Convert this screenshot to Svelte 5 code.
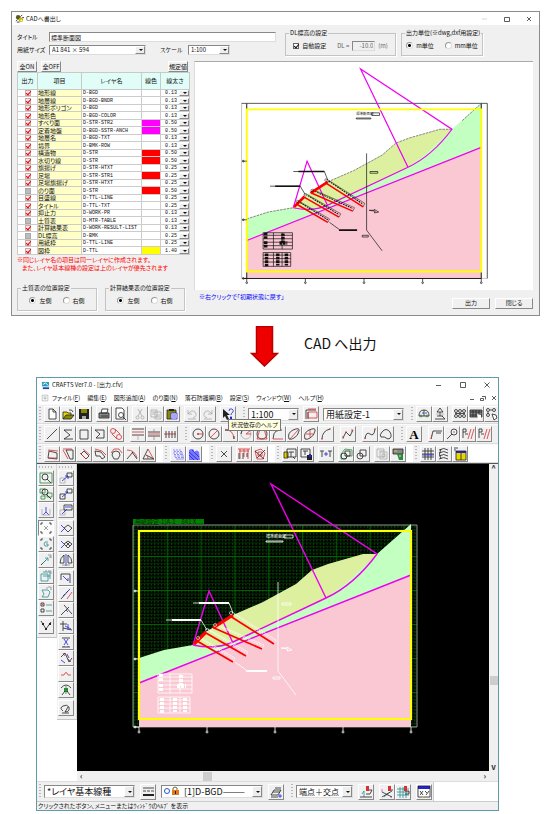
<script>
  const rows = [
    ['地形線', 'D-BGD', '', '0.13', 1], ['地層線', 'D-BGD-BNDR', '', '0.13', 1],
    ['地形ポリゴン', 'D-BGD', '', '0.13', 1], ['地形色', 'D-BGD-COLOR', '', '0.13', 1],
    ['すべり面', 'D-STR-STR2', '#ff00ff', '0.50', 1], ['定着地盤', 'D-BGD-SSTR-ANCH', '#ff00ff', '0.50', 1],
    ['地層名', 'D-BGD-TXT', '', '0.13', 1], ['境界', 'D-BMK-ROW', '', '0.13', 1],
    ['構造物', 'D-STR', '#ff0000', '0.50', 1], ['水切り線', 'D-STR', '#ff0000', '0.50', 1],
    ['旗揚げ', 'D-STR-HTXT', '', '0.25', 1], ['足場', 'D-STR-STR1', '#ff0000', '0.25', 1],
    ['足場旗揚げ', 'D-STR-HTXT', '', '0.25', 1], ['のり面', 'D-STR', '#ff0000', '0.50', 0],
    ['目盛線', 'D-TTL-LINE', '', '0.25', 1], ['タイトル', 'D-TTL-TXT', '', '0.25', 1],
    ['抑止力', 'D-WORK-PR', '', '0.13', 1], ['土質表', 'D-MTR-TABLE', '', '0.13', 0],
    ['計算結果表', 'D-WORK-RESULT-LIST', '', '0.13', 1], ['DL標高', 'D-BMK', '', '0.25', 0],
    ['用紙枠', 'D-TTL-LINE', '', '0.25', 1], ['図枠', 'D-TTL', '#ffff00', '1.40', 1]
  ];

  const menus = [['ファイル', 'F'], ['編集', 'E'], ['図形追加', 'A'], ['のり面', 'N'], ['落石防護網', 'B'], ['設定', 'S'], ['ウィンドウ', 'W'], ['ヘルプ', 'H']];

  const colours = { k: '#222', r: '#d93030', b: '#2222dd', g: '#2c8a3c', w: '#aaa', t: '#2a8f8f', y: '#e8d800', o: '#8a8a00', n: '#fff', p: '#7777ff', m: '#e050e0', s: '#888' };
  const c = (x, y, r) => `M${x - r} ${y}a${r} ${r} 0 1 0 ${2 * r} 0a${r} ${r} 0 1 0 ${-2 * r} 0`;

  // Each layer is "key:path"; a lower-case key strokes, an upper-case key fills.
  const icons = {
    new: 'N:M4 2h5l2 2v8H4z|k:M4 2h4l3 3v7H4zM8 2v3h3',
    open: 'Y:M2 5h4l1 1h3v2H5l-2 4H2z|O:M5 8h8l-3 4H2z|k:M2 12V5h4l1 1h3v2M2 12l3-4h8l-3 4zM8 3q3-1 4 2',
    save: 'K:M2 2h10v10H2z|O:M4 2h6v4H4z|W:M5 9h4v3H5z',
    print: 'N:M5 2h6l-1 4H4z|S:M2 6h10v5H2z|k:M5 2h6l-1 4H4zM2 6h10v5H2zM4 9h7',
    preview: `N:M3 1h6l2 2v9H3z|k:M3 1h6l2 2v9H3zM10 10l3 3|k:${c(8, 8, 2.5)}`,
    cut: `w:M5 2l4 7M9 2L5 9|w:${c(4.5, 10.5, 1.5)}|w:${c(9.5, 10.5, 1.5)}`,
    copy: 'w:M2 3h6v7H2zM6 5h6v7H6zM3 5h4M3 7h3M7 8h4M7 10h4',
    paste: 'O:M2 3h9v9H2z|K:M4 2h5v2H4z|N:M6 6h6v6H6z|b:M6 6h6v6H6zM7 8h4M7 10h4|k:M2 3h9v3M2 3v9h4',
    undo: 'w:M3 3v4h4M3 7q4-5 7-2q3 4-2 6M3 12h8',
    redo: 'w:M11 3v4H7M11 7q-4-5-7-2q-3 4 2 6M3 12h8',
    help: 'K:M2 2v9l2-2l2 4l2-1l-2-4h3z|b:M8 4q0-3 3-2q2 1 1 3q-2 1-2 3M10 9v2|B:M9 10h2v2H9z',
    page: 'k:M2 3v9M2 3h10M4 5v7|r:M4 5h9v6H4zM4 2h8',
    car: `k:M2 9q0-6 5-6t5 6zM7 3v6|b:M5 6h2M8 6h2|g:${c(4, 9, 1)}|g:${c(10, 9, 1)}`,
    survey: 'k:M7 1L4 5h6zM7 5v4M4 9h6M2 12h10L9 9|w:M3 7h8',
    nodes: `k:${c(3, 4, 1.5)}${c(7, 4, 1.5)}${c(11, 4, 1.5)}${c(3, 9, 1.5)}${c(7, 9, 1.5)}${c(11, 9, 1.5)}|k:M2 6.5h10`,
    block: 'S:M1 3h12v7H1z|k:M1 3h12v7H1zM1 5h12M1 8h12M4 3v7M7 3v7M10 3v7|N:M8 7l4 1v4l-3 1z',
    hand: `k:${c(3, 3, 1.5)}${c(9, 3, 1.5)}${c(3, 8, 1.5)}|k:M3 5v2M5 3h2|N:M7 7l4 1l1 3l-3 2z|k:M7 7l4 1l1 3l-3 2z`,
    line: 'k:M2 12L12 2',
    poly: 'k:M11 3H3l6 5l-6 4h9',
    rect: 'k:M3 3h8v9H3z',
    polygon: 'k:M2 3h9v8H3l4-4z',
    chain: `r:${c(4, 4, 2.5)}|r:${c(10, 10, 2.5)}|r:M3 7l5 5M6 2l5 5`,
    par1: 'k:M1 2h12M1 8h12|r:M1 5h12|w:M7 8v5',
    par2: 'k:M1 5h12M1 9h12|r:M1 7h12|s:M7 2v3M7 9v4',
    cross: 'r:M1 7h12|k:M3 4v7M6 4v7M9 4v7M12 4v7',
    circle: `k:${c(7, 7, 5)}|R:${c(7, 7, 1)}|r:M7 7h5`,
    circle2: `k:${c(7, 7, 5)}|r:M3 11L11 3`,
    arc: 'r:M2 3q8-1 9 9|k:M2 3l3 0M11 9v3',
    arc2: `w:${c(7, 7, 5)}|k:M2 7a5 5 0 0 1 9-3|r:M7 7l5-4M7 7h5`,
    circle3: `k:${c(7, 7, 5)}|r:M2 12L5 2h4l3 10z`,
    arc4: 'k:M11 3H6q-4 3-4 9|r:M2 12h10M6 3v2',
    ell1: 'k:M2 12Q0 6 6 3Q13 0 12 4Q11 9 7 11Q4 13 2 12|r:M3 12l8-9',
    ell2: 'k:M2 12Q0 6 6 3Q13 0 12 4Q11 9 7 11Q4 13 2 12|r:M7 3v7M3 7h7',
    ell3: 'k:M3 12Q3 4 11 2|r:M10 2h2M2 12h2',
    zig: 'k:M2 11l3-6l4 4l3-6|r:M2 9v3M5 4v2M11 2v3',
    spline: 'k:M2 12q1-8 5-5t5-5|r:M1 11h2M11 2h2',
    blob: 'k:M3 5q4-5 8 0q3 6-2 7q-4-3-7-2q-2-2 1-5z',
    text: '',
    leader: 'k:M4 4h9M7 6h5M4 4l-2 8|r:M2 12l1-4',
    balloon: `k:${c(9, 5, 3)}|k:M7 7l-5 5|r:M8 5h2`,
    hatch: 'r:M7 12l3-10M10 12l3-10|k:M2 2h3v3H2zM2 5v6M4 7h3',
    dim1: 'k:M3 11L4 4l8 2v6z|r:M3 3l10 1M3 11h9',
    dim2: 'k:M5 3h7v9H9L5 3z|r:M2 3l5 9M2 2h9',
    dim3: 'k:M7 4l5 5l-3 3l-5-5z|r:M6 2l7 6M3 6l6 6',
    dim4: 'k:M2 4l6 1l4 5l-3 2l-2-3H3z|r:M2 2l7 2l4 4',
    dim5: 'k:M3 8q0-4 4-4t4 4l-2 4H5z|r:M2 6l3-4h5l3 4',
    dim6: 'r:M2 3q8 0 10 8|k:M2 12l6-7M7 5l5 7',
    dim7: 'k:M2 12h11l-8-4M2 12L7 2|r:M7 2l5 9M5 8q2 1 2 4',
    hat1: 'p:M2 3h2M5 3h2M8 3h2M3 4.500h2M6 4.500h2M9 4.500h2M2 6h2M5 6h2M8 6h4M3 7.500h2M6 7.500h2M9 7.500h3M3 9h2M6 9h3M10 9h3M4 10.500h2M7 10.500h2M10 10.500h3M5 12h8',
    hat2: 'P:M2 3q3-2 5 0v2q3-3 5 0l1 8H2z|b:M2 5l9 8M2 8l5 5M5 3l7 7',
    x: 'k:M4 4l6 6M10 4l-6 6',
    comb: 'r:M1 2h12M2 4h10M3 2v10M7 2v8M11 2v10|k:M2 6v6M6 6v6M10 6v4',
    web: 'r:M2 4l6-2l4 4l-2 6l-6 0z|k:M2 4l9 8M12 3L4 11|r:M5 5h4v4H5z',
    load: 'Y:M1 5h4v6H1z|k:M1 5h4v6H1zM4 2h9v8H4zM6 5h5M8 5v5M10 10l2 2',
    load2: 'K:M8 8h5v5H8z|k:M2 2h9v8H2zM4 4h5M6 4v4|B:M10 7h2v3h-2z',
    tt: 'k:M1 4h4M3 4v6M9 4h4M11 4v6|b:M5 7h4M7 5v4',
    merge1: `g:M2 7l4-5l7 1v6H8l-1 3H2z|k:${c(5, 9, 3)}|k:M6 4h5v5H6z`,
    merge2: `k:${c(5, 9, 3)}|k:M5 3h6v6H5z`,
    ghost: 'w:M2 2h7v8H2zM5 5h7v7H5zM4 4h5M7 7h3v3H7z',
    app: 'S:M2 2h10v5H2z|k:M2 2h10v5H2z|G:M6 7h6v6H8z|y:M3 4h3|n:M8 9h2',
    fence: 'k:M1 4h12M1 7h12M1 10h12M4 1v12M7 1v12M10 1v12|b:M1 8h12',
    wave: 'k:M2 3q5-3 9 0M2 6q5-3 9 0M2 9q5-3 9 0M2 12q5-3 9 0M4 2q-3 5 0 10',
    win: 'Y:M3 4h10v9H3z|B:M3 4h10v2H3z|k:M1 1h4M1 3h2M3 4h10v9H3zM8 6v7',
    zoom: `g:M1 2h12v10H1z|k:${c(6, 6, 3)}|k:M8 8l4 4`,
    zoomall: `g:M1 2h5v4H1zM8 6h5v4H8zM2 9h4v3H2z|k:${c(6, 5, 3)}|k:M8 8l4 4`,
    origin: 'b:M7 4v5M7 9l-3 3M7 9l3 3|w:M3 6v6h8V6',
    sel: 'k:M2 4V2h2M10 2h2v2M12 10v2h-2M4 12H2v-2|s:M5 5l4 4M9 5L5 9',
    selg: 'k:M2 4V2h2M10 2h2v2M12 10v2h-2M4 12H2v-2|t:M9 5q-4-1-4 2t4 2V7H7',
    arrow: 'k:M2 12l5-5|t:M4 10l5-5M9 5H6M9 5v3|s:M9 2h3M10 4h2M12 2v3',
    boxt: 't:M2 5h7v7H2zM4 7h7M4 3h7v7|s:M9 2h3v3M6 2h2',
    layer: 't:M3 5h6l2 2l-2 5H3l2-3z|s:M9 2h3v3M7 3h2',
    checks: 'k:M2 2h3v3H2zM2 8h3v3H2z|r:M2 2l3 3|t:M7 4h6M7 10h6',
    vee: 'K:M3 4h2v2H3zM6 9h2v2H6zM10 4h2v2h-2z|k:M2 2l5 8l5-7',
    move: 'w:M1 7h5v5H1z|k:M8 2h5v4H8z|b:M3 10l6-5M9 5H6M9 5v3',
    copym: 'k:M1 7h5v5H1zM8 2h5v4H8z|b:M3 10l6-5M9 5H6',
    numcopy: 'w:M1 7h5v5H1z|k:M5 2h8v5H5z|b:M3 11l5-5M7 3v2M9 3v2M11 3v2',
    rot: 'k:M9 4l4 3l-4 4l-4-4z|b:M2 4l4 4M2 11l3-3',
    rotc: 'k:M9 4l4 3l-4 4l-4-4zM7 5l4 4M11 5L7 9|b:M2 4l3 3M2 11l3-3',
    mirror: 'k:M5 2v8H1q0-5 4-8M9 2v8h4q0-5-4-8|b:M7 1v12|s:M3 12h8',
    corner: 'k:M2 3h9v9M2 3v6|b:M4 5l5 5M9 10V7',
    slant: 'k:M2 12L9 4|r:M8 12l5-7|b:M7 6l4-4M4 9l2-2',
    extend: 'k:M2 12L10 4M5 2l8 9|b:M7 7l2 2',
    trim: 'k:M1 5h7M4 2v10M4 9l9 2|b:M6 7l6 3M9 5v6',
    snip: 'k:M3 3h8M3 12h8|b:M5 4l4 6M9 4L5 10M5 11v1M9 11v1',
    joint: 'r:M4 2l2 3M9 8l3 3|k:M2 6l4-4l4 9l3-4|b:M2 9l4 3M8 3l2 4',
    bump: 'r:M2 8h3q2-5 4 0h3',
    tree: 'G:M5 5h4v4H5z|k:M2 5q5-6 10 0M3 12l3-4M11 12L8 8|g:M7 3v8',
    loop: 'k:M4 10q-4-3 0-5t6 1q1 5-4 5l3-5M3 12h7',
    lines: 'k:M2 3h11M2 6h3M6 6h3M10 6h3|K:M2 9h11v2H2z',
    props: 'k:M2 10l3-5h7l-3 5zM4 7h7M6 3h6M2 12h7|b:M9 11h4M11 9v4',
    snap1: 't:M5 12V6M3 9l2-3|k:M1 12h12M8 5h5l-2 4H7|R:M7 1h3v5H7z',
    snap2: 'm:M2 4v3M11 11v2|t:M4 12l6-5|k:M2 7l10 5M12 6L2 12M9 5h4|R:M8 1h3v5H8z',
    snap3: 't:M1 4h12M1 7h12M1 10h12M4 2v11M7 2v11M10 2v11|k:M9 6h4v3H9|R:M8 1h3v5H8z',
    xy: 'N:M1 2h12v10H1z|B:M1 1h12v3H1z|k:M1 1h12v11H1zM3 6l3 4M6 6l-3 4M8 6l2 2M12 6l-3 4|y:M5 13l2-2',
    doc: 'N:M2 2h10v10H2z|s:M2 2h10v10H2zM4 5h6M4 8h6M7 5v5'
  };
  const layers = (name) => icons[name] ? icons[name].split('|').map((l) => {
    const key = l[0];
    const low = key.toLowerCase();
    return { d: l.slice(2), fill: key === low ? 'none' : colours[low], stroke: key === low ? colours[low] : 'none' };
  }) : [];

  const paper = [
    [['new', 'open', 'save'], ['print', 'preview'], ['cut', 'copy', 'paste'], ['undo', 'redo'], ['help']],
    [[{ label: '縮尺', value: '1:100', cls: 'w51' }], ['page'], [{ label: '用紙', value: '用紙設定-1', cls: 'w81' }]],
    [['car', 'survey'], ['nodes', 'block', 'hand']]
  ];
  const draw = [
    [['line', 'poly', 'rect', 'polygon', 'chain'], ['par1', 'par2', 'cross']],
    [['circle', 'circle2', 'arc', 'arc2', 'circle3', 'arc4', 'ell1', 'ell2', 'ell3'], ['zig'], ['spline', 'blob']],
    [['text'], ['leader', 'balloon', 'hatch', 'hatch']]
  ];
  const shape = [
    [['dim1', 'dim2', 'dim3', 'dim4', 'dim5', 'dim6', 'dim7']],
    [['hat1', 'hat2']],
    [['x'], ['comb', 'web']],
    [['load', 'load2'], ['tt'], ['merge1', 'merge2'], ['ghost', 'app']],
    [['fence', 'wave', 'win']]
  ];
  const bottom = [
    [[{ label: '線種', value: '*レイヤ基本線種', cls: 'w91' }], ['lines'], [{ label: 'レイヤ', value: '[1]D-BGD———', cls: 'w102' }], ['props']],
    [[{ label: 'スナップ', value: '端点＋交点', cls: 'w57' }], ['snap1'], ['snap2', 'snap3'], ['xy']]
  ];
  const sideA = [['zoom', 'zoomall', 'origin'], ['sel', 'selg', 'arrow', 'boxt', 'layer', 'checks'], ['vee']];
  const sideB = [['move', 'copym', 'numcopy'], ['rot', 'rotc', 'mirror'], ['corner', 'slant', 'extend', 'trim', 'snip', 'joint', 'bump', 'tree'], ['loop']];

  const bolts = [[197, 641, 233, 662], [206, 633, 246, 656], [214, 628, 262, 649], [230, 616, 274, 644]];
  const ticksX = [139, 207, 275, 343, 411];
  const ticksY = [591, 659, 727];
</script>

{#snippet icon(name)}
  <svg viewBox="0 0 14 14" aria-hidden="true">
    {#each layers(name) as l}
      <path d={l.d} fill={l.fill} stroke={l.stroke} />
    {/each}
    {#if name === 'text'}<text x="7" y="12" text-anchor="middle">A</text>{/if}
  </svg>
{/snippet}

{#snippet item(it)}
  {#if typeof it === 'string'}
    <button class="tool" class:on={it === 'sel'} aria-label={it}>{@render icon(it)}</button>
  {:else}
    <span class="drop big {it.cls}">
      {#if it.cls === 'w102'}
        <svg class="lock" viewBox="0 0 20 10" aria-hidden="true">
          <circle cx="5" cy="5" r="2.500" fill="none" stroke="#2255cc" />
          <path d="M11 4V2q2-2 4 0v2" fill="none" stroke="#7a6a20" />
          <path d="M10 4h7v5h-7z" fill="#e07a20" /><path d="M13 5h1v3h-1z" fill="#222" />
        </svg>
      {/if}
      <select aria-label={it.label}><option>{it.value}</option></select>
    </span>
  {/if}
{/snippet}

{#snippet toolbar(bars, cls)}
  <div class="row {cls}">
    {#each bars as bar}
      <div class="bar">
        <span class="grip"></span>
        <div class="groups">
          {#each bar as group}
            <div class="group">{#each group as it}{@render item(it)}{/each}</div>
          {/each}
        </div>
      </div>
    {/each}
  </div>
{/snippet}

{#snippet side(groups)}
  <div class="side">
    <span class="grip flat"></span>
    {#each groups as group}
      <div class="stack">{#each group as it}{@render item(it)}{/each}</div>
    {/each}
  </div>
{/snippet}

{#snippet section(ink, light)}
  <path d="M139 683L411 575V727H139z" fill="#f9c8d2" />
  <path d="M139 658L164 650L193 645Q215 650 233 642L326 598L377 554L411 524V575L139 683z" fill="#c2ffc0" />
  <path d="M193 645L206 632L233 615L263 602L296 584L312 570L328 564L363 554H377L345 584L326 598L233 642Q215 650 193 645z" fill="#dcf0a0" />
  {#if light}
    <path d="M139 658L164 650L193 645M233 615L263 602L296 584L312 570L328 564L363 554H377M389 544L411 524" fill="none" stroke="#555" stroke-width=".8" stroke-dasharray="3 1" />
    <path d="M133 524H418V727H133z" fill="none" stroke="#bbb" />
    <path d="M133 524H418V727" fill="none" stroke="#555" />
    <path d="M139 524v7M411 524v7M139 719v8M411 719v8M136 727H411" stroke="#222" stroke-width="1.200" />
  {/if}
  <g fill="none" stroke="#f000f0" stroke-width="1.400">
    <path d="M139 683L411 575M193 645Q215 650 233 642L326 598Q354 585 377 554L271 484L326 598M193 645L209 591L233 643" />
  </g>
  <g fill="none" stroke={ink} stroke-width=".8">
    {#each bolts as [a, b, x, y]}
      <path d="M{a + 2} {b - 4}L{x + 2} {y - 4}L{x} {y}" stroke-width=".6" />
      <path d="M{a + 4} {b - 2}L{x} {y - 3}" stroke-dasharray="2 1" stroke-width={light ? 1.2 : .7} />
    {/each}
    <path d="M193 603H229L233 613M166 620H201L207 630M278 582V671L296 695M235 662L246 670M281 648h6v-1l5 3l-5 1l1-2zM273 677h7v2h-7zM282 603h9v2h-9zM284 535h9v3h-9zM266 541h17v1h-17z" />
    <path d="M199 603H229M172 620H201M246 671H267" stroke-width="1.800" />
    <path d="M158 674h34v19h-34zM158 677h34M158 681h34M158 685h34M158 689h34M170 674v19M180 674v19M158 697h32v16h-32zM158 700h32M158 704h32M158 708h32M170 697v16M180 697v16" />
    <path d="M161 674v8M161 684v8M181 675v12M177 686h9M162 698v15M175 698v14M185 698v14" stroke-width="4" stroke-dasharray="3 1" />
  </g>
  <path d="M194 644L206 632M213 628L233 615" stroke="#ff0000" stroke-width="3.200" />
  {#each bolts as [a, b, x, y]}
    <path d="M{a} {b}L{x} {y}" stroke="#ff0000" stroke-width="1.800" />
    <circle cx={a + 1} cy={b - 3} r="1.500" fill="none" stroke={ink} stroke-width=".6" />
  {/each}
  <path d="M139 531H411V719H139z" fill="none" stroke="#ffff00" stroke-width="2.200" />
  <text x="266" y="538" font-size="4" fill={ink}>標準断面図</text>
  <g stroke={ink} stroke-width=".8" fill="none">
    {#each ticksX as x}<path d="M{x} 727v4" /><circle cx={x} cy="732" r="1" />{/each}
    {#each ticksY as y}<path d="M134 {y}h5" /><circle cx="135" cy={y} r="1" />{/each}
  </g>
{/snippet}

<main>
  <section class="dialog">
    <header class="cap">
      <svg class="logo" viewBox="0 0 10 10" aria-hidden="true">
        <circle cx="3.500" cy="3.500" r="2.500" fill="#555a20" /><circle cx="6.500" cy="6.500" r="2.500" fill="#c8b400" />
        <path d="M1 8l2-2M6 3l2-2M8 4h2M2 9h3" stroke="#333" /><circle cx="7" cy="7" r="1" fill="#fff" />
      </svg>
      <h1>CADへ書出し</h1>
      <div class="win">
        <button aria-label="最小化"><svg viewBox="0 0 8 8"><path d="M1 4h5" stroke="#ccc" /></svg></button>
        <button aria-label="最大化"><svg viewBox="0 0 8 8"><path d="M1.500 2.500h5v4h-5z" /></svg></button>
        <button aria-label="閉じる"><svg viewBox="0 0 8 8"><path d="M2 2l4 4M6 2L2 6" /></svg></button>
      </div>
    </header>

    <div class="top">
      <div class="form">
        <div class="line"><label for="ttl">タイトル</label><input id="ttl" type="text" value="標準断面図" /></div>
        <div class="line">
          <label for="size">用紙サイズ</label>
          <span class="drop w97"><select id="size"><option>A1 841 × 594</option></select></span>
          <label class="scale" for="scale">スケール</label>
          <span class="drop w42"><select id="scale"><option>1:100</option></select></span>
        </div>
      </div>
      <fieldset class="datum">
        <legend>DL標高の設定</legend>
        <label><input type="checkbox" class="plain" checked />自動設定</label>
        <label class="dim">DL = <input type="text" class="num" value="-10.0" disabled /> (m)</label>
      </fieldset>
      <fieldset class="unit">
        <legend>出力単位(※dwg,dxf用設定)</legend>
        <label><input type="radio" name="unit" checked />m単位</label>
        <label><input type="radio" name="unit" />mm単位</label>
      </fieldset>
    </div>

    <div class="mid">
      <div class="left">
        <div class="acts"><button class="btn">全ON</button><button class="btn">全OFF</button><button class="btn last">規定値</button></div>
        <table>
          <thead><tr><th class="c1">出力</th><th class="c2">項目</th><th class="c3">レイヤ名</th><th class="c4">線色</th><th class="c5">線太さ</th></tr></thead>
          <tbody>
            {#each rows as [name, layer, colour, width, on]}
              <tr>
                <td class="chk"><input type="checkbox" checked={!!on} aria-label={name} /></td>
                <td class="nm">{name}</td>
                <td class="ly">{layer}</td>
                <td style:background={colour || '#fff'}></td>
                <td class="wd"><span class="drop cell"><select aria-label="{name}の線太さ"><option>{width}</option></select></span></td>
              </tr>
            {/each}
          </tbody>
        </table>
        <p class="warn">※同じレイヤ名の項目は同一レイヤに作成されます。<br /><span>また、レイヤ基本線種の設定は上のレイヤが優先されます</span></p>
        <div class="pair">
          <fieldset>
            <legend>土質表の位置設定</legend>
            <label><input type="radio" name="soil" checked />左側</label>
            <label><input type="radio" name="soil" />右側</label>
          </fieldset>
          <fieldset>
            <legend>計算結果表の位置設定</legend>
            <label><input type="radio" name="res" checked />左側</label>
            <label><input type="radio" name="res" />右側</label>
          </fieldset>
        </div>
      </div>
      <div class="right">
        <svg class="view" viewBox="79 476 392 264" role="img" aria-label="断面プレビュー">{@render section('#111', true)}</svg>
        <div class="foot">
          <p>※右クリックで「初期状態に戻す」</p>
          <button class="btn">出力</button><button class="btn">閉じる</button>
        </div>
      </div>
    </div>
  </section>

  <div class="flow">
    <svg viewBox="0 0 29 41" aria-hidden="true"><path d="M6.500 .5h16V27.500h5L14.500 40L1.500 27.500h5z" fill="#ee0000" stroke="#b80000" stroke-width="1.500" /></svg>
    <p>CAD へ出力</p>
  </div>

  <section class="app">
    <header class="cap">
      <svg class="logo" viewBox="0 0 10 10" aria-hidden="true"><path d="M1 1h8v5H1z" fill="#2aa0b8" /><path d="M2 7h7v2H2z" fill="#2244bb" /><path d="M2 4l3-2l3 3" stroke="#fff" fill="none" /></svg>
      <h1>CRAFTS Ver7.0 - [出力.cfv]</h1>
      <div class="win">
        <button aria-label="最小化"><svg viewBox="0 0 8 8"><path d="M1 4.500h5" /></svg></button>
        <button aria-label="最大化"><svg viewBox="0 0 8 8"><path d="M1.500 1.500h5v5h-5z" /></svg></button>
        <button aria-label="閉じる"><svg viewBox="0 0 8 8"><path d="M1.500 1.500l5 5M6.500 1.500l-5 5" /></svg></button>
      </div>
    </header>
    <nav>
      <span class="mdi">{@render icon('doc')}</span>
      {#each menus as [name, key]}<button>{name}(<u>{key}</u>)</button>{/each}
      <div class="sub">
        <button aria-label="子を最小化"><svg viewBox="0 0 8 8"><path d="M2 5.500h4" /></svg></button>
        <button aria-label="子を元に戻す"><svg viewBox="0 0 8 8"><path d="M1.500 4.500h3v2h-3zM3 2.500h3.500v3" /></svg></button>
        <button aria-label="子を閉じる"><svg viewBox="0 0 8 8"><path d="M2 2l4 4M6 2L2 6" /></svg></button>
      </div>
    </nav>
    <div class="bars">
      {@render toolbar(paper, 'one')}
      <span class="tip" role="tooltip">状況依存のヘルプ</span>
      {@render toolbar(draw, 'two')}
      {@render toolbar(shape, 'three')}
    </div>
    <div class="work">
      {@render side(sideA)}
      {@render side(sideB)}
      <div class="stage">
        <svg class="canvas" viewBox="77 464 412 307" role="img" aria-label="出力図面">
          <defs>
            <pattern id="minor" x="133" y="522" width="3.380" height="3.400" patternUnits="userSpaceOnUse">
              <path d="M1.500 .5v1.800" stroke="#0b5a0b" /><path d="M0 .5h3.400" stroke="#042f04" stroke-width=".8" />
            </pattern>
            <pattern id="major" x="133" y="522" width="33.800" height="34" patternUnits="userSpaceOnUse">
              <path d="M0 0V34M0 0H33.800" stroke="#007000" stroke-width="1.500" />
            </pattern>
          </defs>
          <path d="M77 464h412v307H77z" fill="#000" />
          <path d="M133 525H417V727H133z" fill="url(#minor)" />
          <path d="M133 525H417V727H133z" fill="url(#major)" />
          <path d="M133 525H417V727H133z" fill="none" stroke="#8a948a" />
          <path d="M133 519h71v5h-71z" fill="#008200" />
          <text x="135" y="524" font-size="6" fill="#002800">用紙設定-1[A-1　841 X…</text>
          {@render section('#fff', false)}
        </svg>
        <div class="hbar"><i>‹</i><b></b><i>›</i></div>
      </div>
      <div class="vbar"><i>^</i><b></b><i>v</i></div>
    </div>
    <div class="under">{@render toolbar(bottom, 'base')}</div>
    <footer>クリックされたボタン、メニューまたはｳｨﾝﾄﾞｳのﾍﾙﾌﾟ を表示</footer>
  </section>
</main>

<style>
  :global(body) { background: #fff; }
  main { padding: 11px 6px 4px 11px; font-family: "Noto Sans CJK JP", "Liberation Sans", sans-serif; font-size: 6px; line-height: 8px; color: #111; font-feature-settings: "palt"; }
  main * { box-sizing: border-box; }
  button, input, select { font: inherit; font-feature-settings: inherit; color: inherit; margin: 0; padding: 0; border-radius: 0; }
  h1, p { margin: 0; font-size: inherit; font-weight: 400; }
  svg { display: block; }
  fieldset { min-width: 0; margin: 0; padding: 5px 0; border: 1px solid #c4c4c4; box-shadow: 1px 1px 0 #fff; display: flex; justify-content: center; gap: 11px; }
  legend { padding: 0 1px; margin-left: 3px; line-height: 6px; white-space: nowrap; }
  fieldset label { display: flex; align-items: center; gap: 3px; height: 9px; white-space: nowrap; }

  .cap { display: flex; align-items: center; height: 13px; padding-left: 3px; background: #fff; }
  .cap h1 { margin-left: 2px; flex: 1; }
  .logo { width: 9px; height: 9px; }
  .win { display: flex; gap: 14px; padding-right: 6px; }
  .win button, .sub button { width: 8px; height: 8px; border: 0; background: none; }
  .win svg, .sub svg { width: 8px; height: 8px; fill: none; stroke: #333; stroke-width: .8; }

  .dialog { border: 1px solid #8c8c8c; background: #f0f0f0; }
  .top { display: flex; padding: 5px 56px 0 5px; gap: 5px; height: 36px; align-items: flex-start; }
  .form { flex: 1; margin: 2px 4px 0 0; display: grid; gap: 3px; }
  .line { display: flex; height: 10px; align-items: center; }
  .line label { width: 32px; white-space: nowrap; }
  .line .scale { width: 28px; margin-left: 14px; }
  input[type="text"] { height: 10px; border: 1px solid; border-color: #888 #ddd #ddd #888; background: #fff; padding: 0 1px; min-width: 0; }
  .line input { flex: 1; }
  input.num { width: 23px; text-align: right; background: #f0f0f0; }
  .dim { color: #666; }
  .datum { width: 111px; }
  .unit { width: 82px; }

  input[type="checkbox"] { appearance: none; width: 6px; height: 6px; background: #bcbcbc; border: 1px solid #a8a8a8; position: relative; display: block; }
  input[type="checkbox"]:checked { background: #ffe4e4; border-color: #c8a8a8; }
  input[type="checkbox"]:checked::after { content: ""; position: absolute; left: 1px; top: -1px; width: 2px; height: 4px; border: solid #e80000; border-width: 0 1px 1px 0; transform: rotate(40deg); }
  input.plain:checked { background: #fff; border-color: #666; }
  input.plain:checked::after { border-color: #111; }
  input[type="radio"] { appearance: none; width: 7px; height: 7px; border: 1px solid #999; border-right-color: #ddd; border-bottom-color: #ddd; border-radius: 50%; background: #fff; }
  input[type="radio"]:checked { background: radial-gradient(#000 0 1px, #fff 2px); }

  .drop { position: relative; display: block; height: 10px; background: #fff; border: 1px solid; border-color: #888 #ddd #ddd #888; }
  .drop select { appearance: none; display: block; width: 100%; height: 100%; border: 0; background: none; padding: 0 9px 0 2px; line-height: 8px; outline: 0; }
  .drop::before { content: ""; position: absolute; right: 0; top: 0; bottom: 0; width: 8px; background: #eee; border: 1px solid; border-color: #fff #888 #888 #fff; pointer-events: none; }
  .drop::after { content: ""; position: absolute; right: 2px; top: 50%; margin-top: -1px; border: 2px solid transparent; border-top-color: #111; border-bottom: 0; pointer-events: none; }
  .cell { height: 7px; border: 0; }
  .cell select { line-height: 7px; font-family: "Liberation Mono", monospace; font-size: 5px; padding-left: 4px; }
  .w97 { width: 97px; } .w42 { width: 42px; } .w51 { width: 51px; } .w81 { width: 81px; } .w91 { width: 91px; } .w102 { width: 102px; } .w57 { width: 57px; }

  .mid { display: flex; padding: 0 6px 4px 5px; gap: 4px; }
  .left { width: 173px; flex: none; }
  .acts { display: flex; gap: 4px; height: 11px; }
  .btn { height: 11px; min-width: 20px; line-height: 8px; background: #f0f0f0; border: 1px solid; border-color: #fff #888 #888 #fff; }
  .last { margin-left: auto; margin-right: 2px; }
  table { width: 100%; table-layout: fixed; border-collapse: collapse; background: #fff; }
  th { height: 17px; background: #e0fdf8; font-weight: 400; padding: 0; border: 1px solid #c4ccca; }
  td { padding: 0; height: 7px; line-height: 6px; border: 1px solid #ccc; white-space: nowrap; overflow: hidden; }
  tbody tr { height: 7px; }
  tbody tr:nth-child(even), tbody tr:nth-child(even) td { height: 8px; }
  .c1 { width: 20px; } .c2 { width: 44px; } .c3 { width: 60px; } .c4 { width: 19px; }
  .chk input { margin: 0 auto; }
  .nm { background: #ffffc6; }
  .ly { font-family: "Liberation Mono", monospace; font-size: 5px; padding-left: 1px; }
  .wd .cell { height: 6px; }
  .warn { color: #ff0000; white-space: nowrap; margin-top: 1px; }
  .warn span { padding-left: 5px; }
  .pair { display: flex; gap: 8px; margin-top: 13px; }
  .pair fieldset { width: 80px; }
  .right { flex: 1; min-width: 0; }
  .view { width: 100%; height: auto; background: #fff; border-top: 1px solid #aaa; border-left: 1px solid #ddd; }
  .foot { display: flex; gap: 5px; padding: 3px 0 0 5px; }
  .foot p { flex: 1; color: #0000ff; }
  .foot .btn { width: 38px; margin-top: 5px; }

  .flow { display: flex; align-items: flex-start; gap: 25px; padding: 10px 0 10px 239px; }
  .flow svg { width: 29px; height: 41px; }
  .flow p { font-size: 14px; line-height: 34px; }

  .app { margin: 0 41px 0 25px; border: 1px solid #5f9aa8; background: #f0f0f0; }
  .app .cap { height: 14px; padding-left: 4px; }
  .app .win { gap: 16px; padding-right: 7px; }
  nav { display: flex; align-items: center; height: 12px; padding-left: 4px; gap: 7px; background: #fff; }
  nav > button { border: 0; background: none; white-space: nowrap; }
  .mdi { width: 8px; height: 8px; margin-right: -4px; }
  .sub { display: flex; gap: 3px; margin-left: auto; }
  .bars { position: relative; border-bottom: 1px solid #555; }
  .row { display: flex; height: 20px; align-items: center; gap: 5px; overflow: hidden; border-top: 1px solid #fafafa; border-bottom: 1px solid #dcdcdc; }
  .three { height: 19px; gap: 7px; background: #fff; }
  .three .bar { background: #f0f0f0; }
  .bar { display: flex; flex: none; align-items: center; height: 100%; }
  .grip { width: 2px; height: 15px; margin: 0 3px 0 2px; background: repeating-linear-gradient(#b8b8b8 0 1px, #f0f0f0 1px 3px); }
  .groups { display: flex; align-items: center; gap: 4px; }
  .two .groups { gap: 6px; }
  .base .groups { gap: 5px; }
  .group { display: flex; align-items: center; }
  .tool { width: 16px; height: 16px; flex: none; background: #f0f0f0; border: 1px solid; border-color: #fff #888 #888 #fff; }
  .on { background: #fafafa; border-color: #888 #fff #fff #888; }
  .tool svg, .mdi svg { width: 100%; height: 100%; stroke-width: .8; }
  .tool text { font: bold 13px "Liberation Serif", serif; }
  .big { height: 13px; font-size: 9px; display: flex; }
  .big select { line-height: 11px; flex: 1; min-width: 0; }
  .big.w57 { font-size: 8px; }
  .lock { width: 20px; height: 10px; flex: none; }
  .tip { position: absolute; left: 191px; top: 15px; z-index: 2; padding: 1px 2px; background: #ffffe1; border: 1px solid #777; }

  .work { display: flex; background: #fff; }
  .side { width: 20px; flex: none; align-self: flex-start; display: flex; flex-direction: column; gap: 2px; padding: 2px 3px 3px 1px; background: #f0f0f0; border-right: 1px solid #d4d4d4; border-bottom: 1px solid #c4c4c4; }
  .side .flat { width: 14px; height: 2px; margin: 0 1px; background: repeating-linear-gradient(90deg, #b8b8b8 0 1px, #f0f0f0 1px 3px); }
  .stack { display: flex; flex-direction: column; }
  .stage { flex: 1; min-width: 0; }
  .canvas { width: 100%; height: auto; }
  .hbar, .vbar { display: flex; align-items: center; background: #f0f0f0; color: #333; }
  .hbar { height: 10px; justify-content: space-between; padding: 0 3px; }
  .hbar b { width: 9px; height: 9px; background: #cdcdcd; margin-right: 37%; }
  .vbar { width: 9px; flex: none; flex-direction: column; padding-bottom: 10px; }
  .vbar b { width: 8px; height: 9px; background: #cdcdcd; margin-top: auto; margin-bottom: 78px; }
  .hbar i, .vbar i { font-style: normal; font-size: 8px; line-height: 8px; font-weight: 700; }
  .under { background: #fff; border-top: 1px solid #ddd; }
  .base { height: 19px; width: 397px; border: 0; border-right: 1px solid #ccc; background: #f0f0f0; }
  footer { height: 9px; border-top: 1px solid #ccc; padding-left: 1px; line-height: 8px; white-space: nowrap; }
</style>
